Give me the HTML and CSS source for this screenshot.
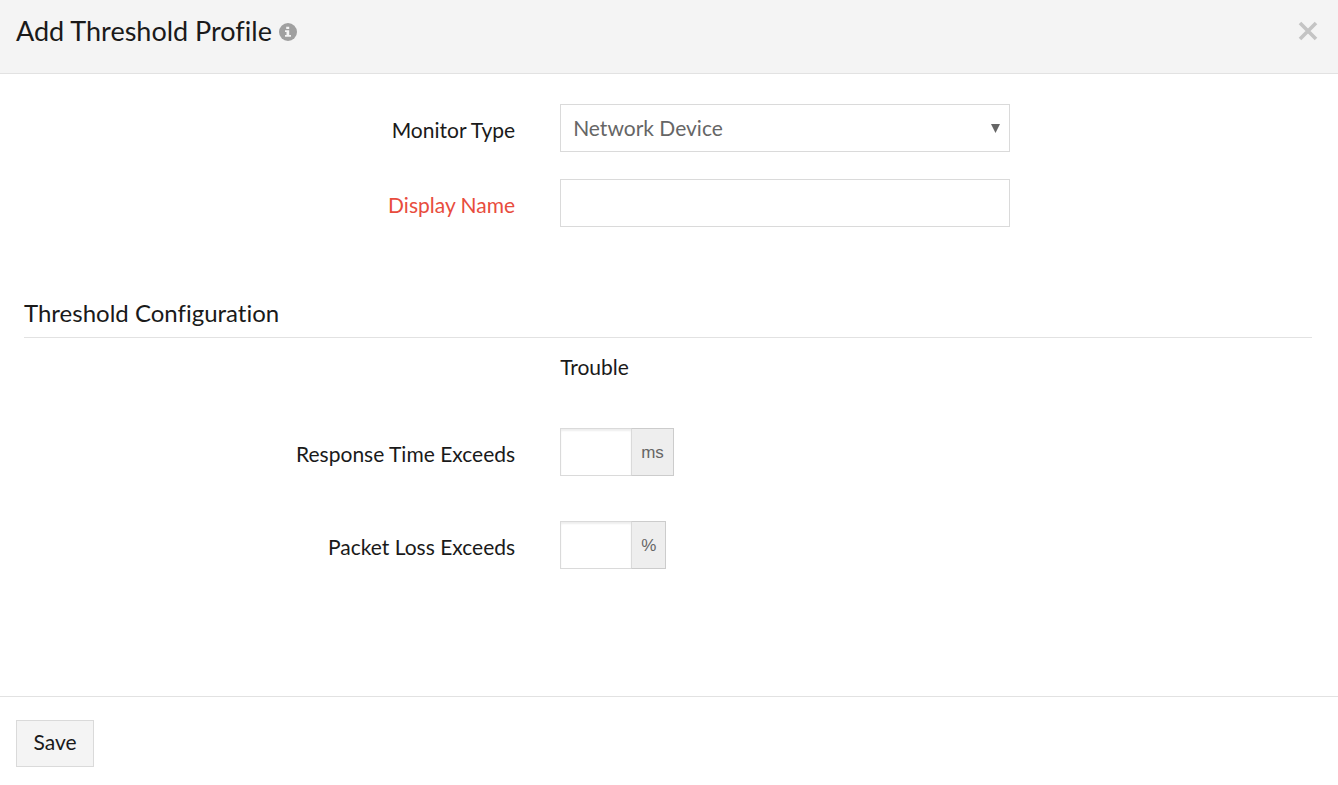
FILE: index.html
```html
<!DOCTYPE html>
<html lang="en">
<head>
<meta charset="utf-8">
<title>Add Threshold Profile</title>
<link rel="stylesheet" href="styles.css">
</head>
<body>
<form class="dialog">
  <header class="dialog-header">
    <h1 class="dialog-title">Add Threshold Profile</h1>
    <svg class="info-icon" viewBox="0 0 18 18" role="img" aria-label="Information">
      <circle cx="9" cy="9" r="9" fill="#a0a0a0"/>
      <path d="M7.200 3.800h3v2.200h-3zM6 7.200h4.200v4.900h1.800v1.700H6v-1.700h1.500V8.900H6z" fill="#f4f4f4"/>
    </svg>
    <button class="close" type="button" aria-label="Close">
      <svg class="close-icon" viewBox="0 0 20 20"><path d="M2 2l16 16M18 2L2 18" stroke="#c4c4c4" stroke-width="3.600" fill="none"/></svg>
    </button>
  </header>
  <main class="dialog-body">
    <div class="fields">
      <div class="row">
        <label class="label" for="type">Monitor Type</label>
        <div class="select-wrap">
          <select class="control select" id="type"><option>Network Device</option></select>
          <svg class="arrow" viewBox="0 0 9 9"><path d="M0 0h9L4.500 9z" fill="#666"/></svg>
        </div>
      </div>
      <div class="row">
        <label class="label required" for="name">Display Name</label>
        <input class="control" id="name" type="text">
      </div>
    </div>
    <section class="section">
      <h2 class="section-title">Threshold Configuration</h2>
    </section>
    <div class="row"><span class="label"></span><span class="column-title">Trouble</span></div>
    <div class="fields thresholds">
      <div class="row">
        <label class="label" for="response">Response Time Exceeds</label>
        <div class="group"><input class="amount" id="response" type="text"><span class="unit">ms</span></div>
      </div>
      <div class="row">
        <label class="label" for="loss">Packet Loss Exceeds</label>
        <div class="group"><input class="amount" id="loss" type="text"><span class="unit">%</span></div>
      </div>
    </div>
  </main>
  <footer class="dialog-footer"><button class="save" type="submit">Save</button></footer>
</form>
</body>
</html>
```
FILE: styles.css
```css
* { box-sizing: border-box; }
body {
  margin: 0;
  background: #fff;
  color: #1a1a1a;
  font: 21px/24px Lato, "Liberation Sans", sans-serif;
  font-variant-ligatures: none;
}
button, input, select { font: inherit; color: inherit; border-radius: 0; }
.dialog { display: flex; flex-direction: column; min-height: 100vh; }
.dialog-header {
  display: flex;
  align-items: flex-start;
  gap: 7px;
  padding: 15px 20px 26px 16px;
  background: #f4f4f4;
  border-bottom: 1px solid #e2e2e2;
}
.dialog-title { margin: 0; font-size: 27px; line-height: 32px; font-weight: 400; }
.info-icon { width: 18px; height: 18px; margin-top: 8px; }
.close { display: flex; margin: 6px 0 0 auto; padding: 0; border: 0; background: none; }
.close-icon { width: 20px; height: 20px; }
.dialog-body { flex: 1; padding-top: 30px; }
.fields { display: flex; flex-direction: column; gap: 27px; }
.row { display: flex; align-items: center; gap: 45px; }
.label { width: 38.5%; flex: none; padding-top: 4px; text-align: right; }
.required { color: #e84c3d; }
.control {
  width: 450px;
  height: 48px;
  padding: 0 12px;
  border: 1px solid #dadada;
  background: #fff;
  color: #666;
}
.select-wrap { position: relative; }
.select { display: block; appearance: none; }
.arrow { position: absolute; right: 10px; top: 20px; width: 9px; height: 9px; pointer-events: none; }
.section { margin: 70px 26px 17px 24px; }
.section-title {
  margin: 0;
  padding: 2px 0 10px;
  border-bottom: 1px solid #e2e2e2;
  font-size: 24px;
  line-height: 28px;
  font-weight: 400;
}
.thresholds { gap: 45px; margin-top: 49px; }
.group { display: flex; height: 48px; }
.amount {
  width: 71px;
  padding: 0 8px;
  border: 1px solid #dadada;
  border-right: 0;
  box-shadow: inset 0 2px 2px #eee;
}
.unit {
  display: flex;
  align-items: center;
  padding: 1px 9px 0;
  border: 1px solid #ccc;
  border-left-color: #dadada;
  background: #eee;
  color: #666;
  font-family: "Liberation Sans", sans-serif;
  font-size: 17px;
}
.dialog-footer { padding: 23px 16px 18px; border-top: 1px solid #e2e2e2; }
.save { height: 47px; min-width: 78px; padding: 0 15px 3px; border: 1px solid #dadada; background: #f4f4f4; }
```
